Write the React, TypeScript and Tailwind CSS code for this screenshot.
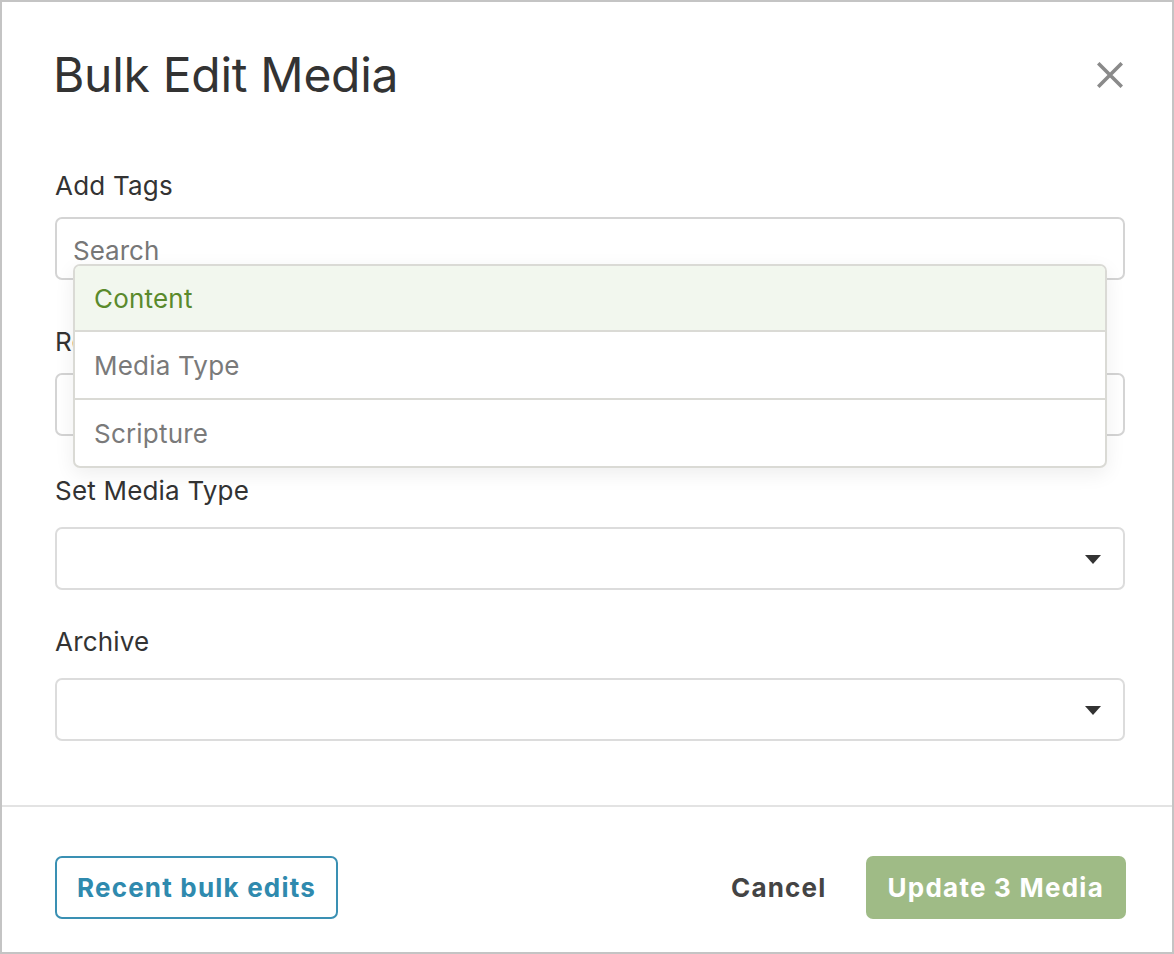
import React from 'react';

const font = { fontFamily: 'Inter, "Noto Sans", "Liberation Sans", sans-serif' };

const tagOptions = ['Content', 'Media Type', 'Scripture'];

const Caret: React.FC = () => (
  <svg className="absolute right-[22px] top-[26px] w-[16px] h-[9px]" viewBox="0 0 16 9" fill="#333">
    <path d="M0 0h16L8 9z" />
  </svg>
);

interface FieldProps {
  label: string;
  className?: string;
  labelGap?: string;
  children: React.ReactNode;
}

const Field: React.FC<FieldProps> = ({ label, className = '', labelGap = 'mb-[15px]', children }) => (
  <div className={`flex flex-col ${className}`}>
    <label className={`text-[26px] leading-[32px] text-[#333] tracking-[0.2px] ${labelGap}`}>{label}</label>
    {children}
  </div>
);

const SelectBox: React.FC = () => (
  <div className="relative h-[63px] border-2 border-[#dcdcdc] rounded-[7px] bg-white">
    <Caret />
  </div>
);

export default function App() {
  return (
    <div
      className="w-[1174px] h-[954px] border-2 border-[#c4c4c4] bg-white flex flex-col"
      style={font}
    >
      {/* Header */}
      <div className="flex items-center justify-between pl-[53px] pr-[48px] pt-[44px]">
        <h1 className="text-[48px] leading-[58px] font-normal text-[#333] tracking-[-0.3px] -ml-[2px]">
          Bulk Edit Media
        </h1>
        <button className="w-[28px] h-[28px] flex items-center justify-center">
          <svg viewBox="0 0 26 26" className="w-[26px] h-[26px]" stroke="#8a8a8a" strokeWidth="3.6" strokeLinecap="square">
            <path d="M2.5 2.5l21 21M23.5 2.5l-21 21" />
          </svg>
        </button>
      </div>

      {/* Body */}
      <div className="flex flex-col pl-[53px] pr-[47px] pt-[66px]">
        <Field label="Add Tags">
          <div className="relative">
            <div className="h-[63px] border-2 border-[#d4d4d4] rounded-[7px] bg-white flex items-center px-[16px] pt-[3px]">
              <span className="text-[26px] text-[#777]">Search</span>
            </div>
            {/* Dropdown */}
            <div className="absolute left-[18px] right-[18px] top-[47px] z-10 bg-white border-2 border-[#dadad5] rounded-[7px] shadow-[0_6px_20px_rgba(0,0,0,0.07)] overflow-hidden">
              {tagOptions.map((opt, i) => (
                <div
                  key={opt}
                  className={`flex items-center px-[19px] text-[26px] tracking-[0.2px] ${
                    i === 0
                      ? 'h-[64px] bg-[#f2f7ee] text-[#5a8a2c]'
                      : 'h-[68px] border-t-2 border-[#dadad5] text-[#7a7a7a]'
                  }`}
                >
                  {opt}
                </div>
              ))}
            </div>
          </div>
        </Field>

        <Field label="Remove Tags" className="mt-[46px]">
          <div className="h-[63px] border-2 border-[#d4d4d4] rounded-[7px] bg-white" />
        </Field>

        <Field label="Set Media Type" className="mt-[39px]" labelGap="mb-[20px]">
          <SelectBox />
        </Field>

        <Field label="Archive" className="mt-[36px]" labelGap="mb-[20px]">
          <SelectBox />
        </Field>
      </div>

      <div className="mt-[64px] h-[2px] bg-[#e3e3e3]" />

      {/* Footer */}
      <div className="flex items-center justify-between pl-[53px] pr-[46px] pt-[49px]">
        <button className="h-[63px] px-[20px] border-2 border-[#3a90b3] rounded-[7px] text-[26px] font-bold tracking-[1.2px] text-[#2f8aae]">
          Recent bulk edits
        </button>
        <div className="flex items-center gap-[39px]">
          <button className="text-[26px] font-bold tracking-[1.2px] text-[#444]">Cancel</button>
          <button className="h-[63px] px-[22px] rounded-[7px] bg-[#9fbb86] text-[26px] font-bold tracking-[1.25px] text-white">
            Update 3 Media
          </button>
        </div>
      </div>
    </div>
  );
}
